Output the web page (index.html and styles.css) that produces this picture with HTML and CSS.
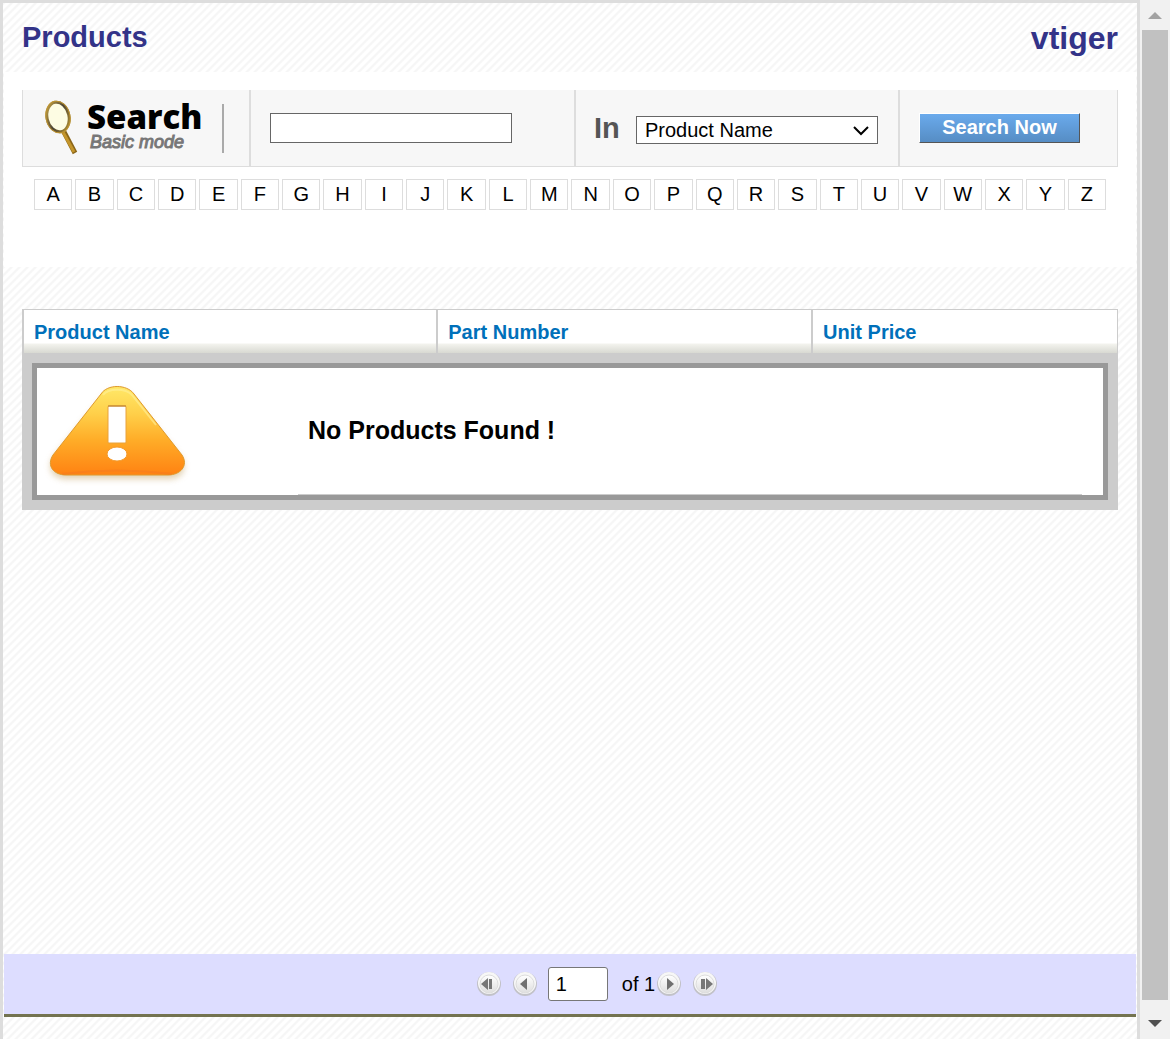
FILE: index.html
```html
<!DOCTYPE html>
<html lang="en">
<head>
<meta charset="utf-8">
<title>Products</title>
<link rel="stylesheet" href="styles.css">
</head>
<body>
<div class="window">
<main class="frame">
  <header class="top">
    <h1 class="title">Products</h1>
    <span class="brand">vtiger</span>
  </header>

  <section class="search-area">
    <form class="search">
      <div class="cell logo-cell">
        <svg class="glass" width="40" height="60" viewBox="0 0 40 60" aria-hidden="true">
          <defs>
            <linearGradient id="rim" x1="0" y1="0" x2="1" y2="1"><stop offset="0" stop-color="#d3ad45"/><stop offset=".5" stop-color="#4c4434"/><stop offset="1" stop-color="#c09a30"/></linearGradient>
          </defs>
          <path d="M22 34 L33 55" stroke="#8a6518" stroke-width="5" stroke-linecap="butt"/>
          <path d="M21 34 L32 54" stroke="#c4952b" stroke-width="3"/>
          <ellipse cx="16" cy="19" rx="11" ry="15" transform="rotate(-12 16 19)" fill="#fdfce3" stroke="url(#rim)" stroke-width="3"/>
          <ellipse cx="16" cy="19" rx="12" ry="16" transform="rotate(-12 16 19)" fill="none" stroke="#bf9431" stroke-width="1"/>
        </svg>
        <div class="logo-text">
          <strong class="logo-name">Search</strong>
          <em class="logo-mode">Basic mode</em>
        </div>
        <span class="logo-rule"></span>
      </div>
      <div class="cell"><input class="query" type="text" aria-label="Search text"></div>
      <div class="cell field-cell">
        <label class="in" for="field">In</label>
        <div class="select-wrap">
          <select class="field" id="field"><option>Product Name</option><option>Part Number</option><option>Unit Price</option></select>
          <svg class="chevron" width="16" height="10" viewBox="0 0 16 10" aria-hidden="true"><path d="M1 1 L8 8 L15 1" fill="none" stroke="#000" stroke-width="2"/></svg>
        </div>
      </div>
      <div class="cell"><button class="go" type="button">Search Now</button></div>
    </form>
    <nav class="letters" aria-label="Alphabet">
      <a href="#">A</a><a href="#">B</a><a href="#">C</a><a href="#">D</a><a href="#">E</a><a href="#">F</a><a href="#">G</a><a href="#">H</a><a href="#">I</a><a href="#">J</a><a href="#">K</a><a href="#">L</a><a href="#">M</a><a href="#">N</a><a href="#">O</a><a href="#">P</a><a href="#">Q</a><a href="#">R</a><a href="#">S</a><a href="#">T</a><a href="#">U</a><a href="#">V</a><a href="#">W</a><a href="#">X</a><a href="#">Y</a><a href="#">Z</a>
    </nav>
  </section>

  <section class="results">
    <table class="list">
      <colgroup><col class="c-name"><col class="c-part"><col class="c-price"></colgroup>
      <thead><tr><th><a href="#">Product Name</a></th><th><a href="#">Part Number</a></th><th><a href="#">Unit Price</a></th></tr></thead>
      <tbody><tr><td colspan="3">
        <div class="empty">
          <svg class="warn" width="150" height="110" viewBox="0 0 150 110" aria-hidden="true">
            <defs>
              <linearGradient id="amber" x1="0" y1="0" x2="0" y2="1"><stop offset="0" stop-color="#ffe868"/><stop offset=".3" stop-color="#ffd04a"/><stop offset=".6" stop-color="#ffad28"/><stop offset="1" stop-color="#ff8212"/></linearGradient>
              <filter id="soft" x="-10%" y="-10%" width="120%" height="130%"><feGaussianBlur stdDeviation="3"/></filter>
            </defs>
            <path d="M62 17 Q75 5 88 17 L140 80 Q147 97 129 100 H22 Q4 97 10 80 Z" fill="#d9c49c" opacity=".8" filter="url(#soft)"/>
            <path d="M59 15 C65 5 85 5 92 15 L140 76 C147 87 138 96 126 96 H24 C12 96 4 87 11 76 Z" fill="url(#amber)" stroke="#e09a2c" stroke-width="1"/>
            <path d="M61 16 C66 9 84 9 90 16 L114 46" fill="none" stroke="#fff09a" stroke-width="2" opacity=".6"/>
            <path d="M20 95 Q75 88 130 95" fill="none" stroke="#f47a20" stroke-width="2" opacity=".5"/>
            <rect x="66" y="27" width="18" height="37" rx="1" fill="#fff" stroke="#e8a23c" stroke-width="1"/>
            <path d="M66 27 H84" stroke="#b5792c" stroke-width="1"/>
            <ellipse cx="75" cy="75" rx="10" ry="7" fill="#fff" stroke="#f39a2c" stroke-width="1"/>
          </svg>
          <p class="message">No Products Found !</p>
        </div>
      </td></tr></tbody>
    </table>
  </section>

  <nav class="pager" aria-label="Pages">
    <button class="page" type="button" aria-label="First page"><svg width="26" height="26" viewBox="0 0 26 26"><use href="#disc"/><path d="M12 7V19L5 13Z M13 8H16V18H13Z" fill="#777"/></svg></button>
    <button class="page" type="button" aria-label="Previous page"><svg width="26" height="26" viewBox="0 0 26 26"><use href="#disc"/><path d="M15 7V19L8 13Z" fill="#707070"/></svg></button>
    <input class="page-number" type="text" value="1" aria-label="Page number">
    <span class="total">of 1</span>
    <button class="page next" type="button" aria-label="Next page"><svg width="26" height="26" viewBox="0 0 26 26"><use href="#disc"/><path d="M11 7V19L18 13Z" fill="#707070"/></svg></button>
    <button class="page" type="button" aria-label="Last page"><svg width="26" height="26" viewBox="0 0 26 26"><use href="#disc"/><path d="M14 7V19L21 13Z M9 8H13V18H9Z" fill="#777"/></svg></button>
  </nav>
</main>
<div class="scrollbar" aria-hidden="true">
  <svg class="arrow" width="14" height="8" viewBox="0 0 14 8"><path d="M0 8 L7 1 L14 8Z" fill="#a3a3a3"/></svg>
  <div class="thumb"></div>
  <svg class="arrow" width="14" height="8" viewBox="0 0 14 8"><path d="M0 0 H14 L7 7Z" fill="#505050"/></svg>
</div>
</div>
<svg class="symbols" width="0" height="0" aria-hidden="true">
  <defs>
    <linearGradient id="metal" x1="0" y1="0" x2="0" y2="1"><stop offset="0" stop-color="#fff"/><stop offset="1" stop-color="#dedede"/></linearGradient>
    <symbol id="disc" viewBox="0 0 26 26">
      <circle cx="13" cy="13" r="12" fill="#c2c2c8"/>
      <circle cx="13" cy="12" r="11" fill="#f7f7f7"/>
      <circle cx="13" cy="13" r="9" fill="url(#metal)" stroke="#ddd" stroke-width="1"/>
    </symbol>
  </defs>
</svg>
</body>
</html>
```
FILE: styles.css
```css
* { box-sizing: border-box; }
body { margin: 0; font: 20px/24px "Liberation Sans", Arial, sans-serif; color: #000; }
a { color: inherit; text-decoration: none; }
.symbols { position: absolute; }

.window { display: flex; min-height: 100vh; }
.frame {
  flex: 1; display: flex; flex-direction: column; min-width: 0; padding-bottom: 22px;
  border: 3px solid #ddd; border-bottom: 0;
  background: linear-gradient(135deg, #f6f6f6 10%, #fff 20% 40%, #f6f6f6 50% 60%, #fff 70% 90%, #f6f6f6) 0 0 / 8px 8px;
}

.top { display: flex; justify-content: space-between; padding: 16px 19px 0; height: 69px; color: #333388; font-weight: bold; }
.title { margin: 0; font-size: 29px; line-height: 36px; }
.brand { font-size: 32px; line-height: 38px; }

.search-area { margin: 0 1px; padding: 18px 18px 57px; background: #fff; }
.search {
  display: grid; grid-template-columns: 226fr 325fr 324fr 219fr; height: 77px;
  border: 1px solid #ddd; border-top: 0; background: #f7f7f7;
}
.cell { display: flex; align-items: center; padding: 0 19px; border-left: 2px solid #ddd; }
.logo-cell { border-left: 0; }
.glass { flex: none; margin-right: 5px; }
.logo-text { display: flex; flex-direction: column; width: 116px; }
.logo-name { font: 800 33px/28px "Open Sans", sans-serif; }
.logo-mode { padding-left: 3px; font-size: 18px; line-height: 22px; color: #777; -webkit-text-stroke: 1px #777; }
.logo-rule { flex: none; margin-left: 19px; width: 2px; height: 49px; background: #aaa; }
.query { width: 242px; height: 30px; padding: 0 8px; border: 1px solid #666; border-radius: 0; font: inherit; background: #fff; }
.field-cell { justify-content: space-between; padding: 0 20px 0 18px; }
.in { font-size: 29px; font-weight: bold; color: #555; }
.select-wrap { position: relative; padding-top: 4px; }
.field { display: block; appearance: none; width: 242px; height: 28px; padding: 0 8px; border: 1px solid #666; border-radius: 0; background: #fff; color: #000; font: inherit; }
.chevron { position: absolute; right: 9px; top: 14px; }
.go {
  width: 161px; height: 30px; padding: 0 0 2px; border: 1px solid; border-color: #fff #555 #555 #fff;
  background: linear-gradient(#6aaaec, #568dc4); color: #fff; font: bold 20px/24px "Liberation Sans", Arial, sans-serif;
}
.letters { display: grid; grid-template-columns: repeat(26, 1fr); gap: 3px; padding: 12px 12px 0; }
.letters a { height: 31px; border: 1px solid #ddd; background: #fff; line-height: 29px; text-align: center; }

.results { flex: 1; padding: 42px 19px; }
.list { width: 100%; border-collapse: separate; border-spacing: 0; table-layout: fixed; background: #ccc; }
.c-name { width: 37.8%; }
.c-part { width: 34.2%; }
.list th {
  height: 44px; padding: 0 10px; border: solid #ccc; border-width: 1px 0 0 2px;
  background: linear-gradient(#fff 0 33px, #f3f3ee 34px, #d8d9d2 43px); color: #0070ba; text-align: left;
}
.list th:last-child { border-right-width: 1px; }
.list td { padding: 10px; }
.empty { display: flex; align-items: center; height: 137px; padding-left: 5px; border: 5px solid #999; background: #fff; }
.warn { flex: none; margin-top: 4px; }
.message {
  flex: 1; align-self: stretch; margin: 0 21px 0 106px; padding-left: 10px; border-bottom: 1px solid #ccc;
  font-size: 25px; font-weight: bold; line-height: 124px;
}

.pager {
  display: flex; align-items: center; justify-content: center; height: 63px; margin: 0 1px;
  padding-left: 64px; border-bottom: 3px solid #737350; background: #ddf;
}
.page { width: 26px; height: 26px; margin-right: 10px; padding: 0; border: 0; background: none; }
.page svg { display: block; }
.page-number { width: 60px; height: 34px; margin-right: 14px; padding: 0 7px; border: 1px solid #777; border-radius: 3px; background: #fff; font: inherit; }
.total { margin-right: 1px; }

.scrollbar { display: flex; flex-direction: column; align-items: center; width: 30px; padding: 11px 0 11px; background: #f1f1f1; }
.thumb { flex: 1; width: 26px; margin: 11px 0 20px; background: #c1c1c1; }
.arrow { flex: none; }
```
